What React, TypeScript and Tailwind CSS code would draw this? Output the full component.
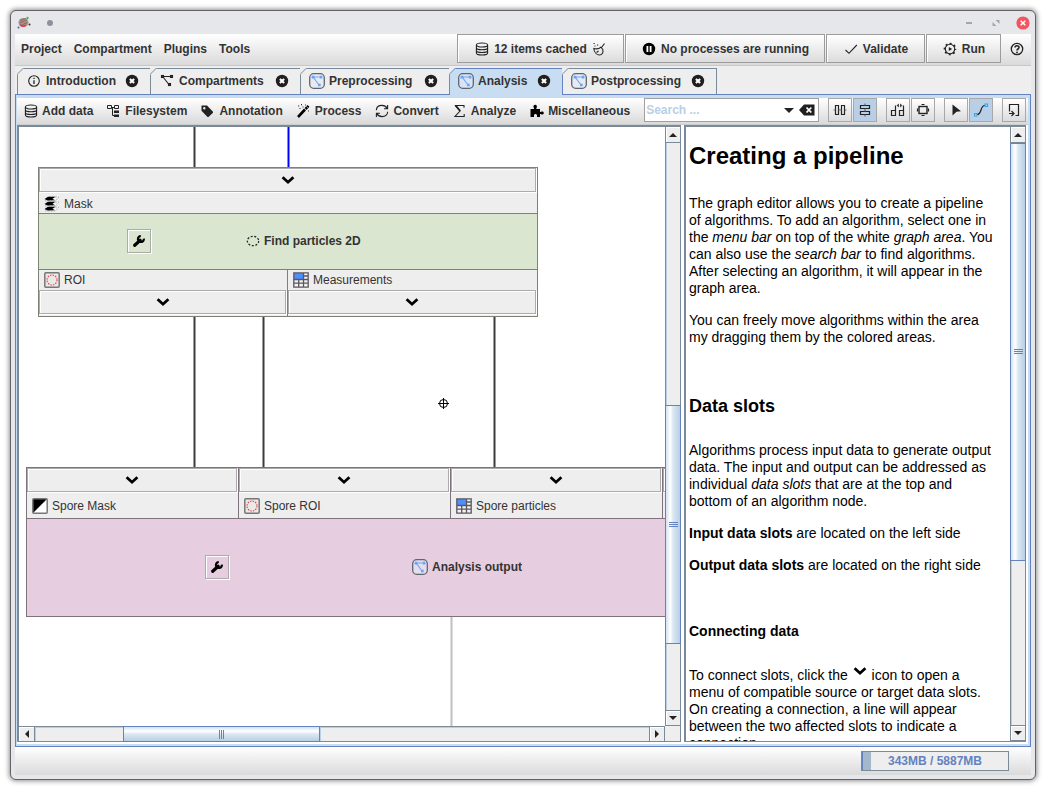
import React from "react";

type IconProps = { className?: string };

const svgBase = "h-4 w-4 shrink-0";

function Icon({ children, className = "" }: { children: React.ReactNode; className?: string }) {
  return (
    <svg viewBox="0 0 16 16" className={`${svgBase} ${className}`} fill="none" stroke="#222" strokeWidth="1.1" aria-hidden="true">
      {children}
    </svg>
  );
}

const DatabaseIcon = () => (
  <Icon>
    <ellipse cx="8" cy="4" rx="5.6" ry="2" />
    <path d="M2.4 4v8c0 1.2 2.5 2 5.6 2s5.6-.8 5.6-2V4M2.4 6.8c0 1.2 2.5 2 5.6 2s5.6-.8 5.6-2M2.4 9.5c0 1.2 2.5 2 5.6 2s5.6-.8 5.6-2" />
  </Icon>
);
const BroomIcon = () => (
  <Icon>
    <path d="M13.500 2.500 10.500 6.500M2.800 7.500c3 .8 5.400.3 7-1.300l2 2.300C12.500 11.800 11 14 8.500 14 5.800 14 3.200 11.500 2.800 7.500ZM5.500 11.500l2-1.500" />
    <path d="M2.500 2.500h1.200M6 4h1.200M3.500 5h1" strokeWidth="1.200" />
  </Icon>
);
const PauseIcon = () => (
  <Icon>
    <circle cx="8" cy="8" r="6.200" fill="#000" stroke="none" />
    <path d="M6.400 5v6M9.600 5v6" stroke="#fff" strokeWidth="1.800" />
  </Icon>
);
const CheckIcon = () => (
  <Icon>
    <path d="m2.500 9 3.500 3.300L13.800 4" />
  </Icon>
);
const GearPlayIcon = () => (
  <Icon>
    <circle cx="8" cy="8" r="4.700" />
    <circle cx="8" cy="8" r="5.600" strokeWidth="1.500" strokeDasharray="2 2.398" strokeDashoffset="1" />
    <path d="M6.800 5.900 10.200 8l-3.400 2.100Z" fill="#222" stroke="none" />
  </Icon>
);
const HelpIcon = () => (
  <Icon>
    <circle cx="8" cy="8" r="5.700" strokeWidth="1.300" />
    <path d="M6 6.600c0-2.400 4-2.400 4-.1C10 8 8 8 8 9.500" strokeWidth="1.600" />
    <circle cx="8" cy="11.400" r=".9" fill="#222" stroke="none" />
  </Icon>
);
const InfoIcon = () => (
  <Icon>
    <circle cx="8" cy="8" r="5.300" />
    <path d="M8 7.200v3.800M8 4.800v1.200" strokeWidth="1.300" />
  </Icon>
);
const GraphIcon = () => (
  <Icon>
    <path d="M5 3.500h6M4.500 4.500l5 6.500" />
    <rect x="2.500" y="2.500" width="2" height="2" />
    <rect x="11.500" y="2.500" width="2" height="2" />
    <rect x="9.500" y="10.500" width="2" height="2" />
  </Icon>
);
const CompartmentIcon = () => (
  <Icon>
    <rect x=".7" y=".7" width="14.600" height="14.600" rx="4" stroke="#5f6670" strokeWidth="1.300" fill="#e4e8f2" fillOpacity=".6" />
    <path d="M4 4h8M4.500 4.500l5.500 7.500" stroke="#6aa5f5" />
    <path d="M2.600 2.800h2.800v2.600H2.600zM10.800 2.800h2.600v2.600h-2.600zM9 10.800h2.700v2.400H9z" fill="#6aa5f5" stroke="none" />
  </Icon>
);
const TreeIcon = () => (
  <Icon>
    <path d="M1.500 2.500h4v3h-4zM8.500 2.500h4v3h-4zM5.500 4.500h3M6.500 4.500v8H8" strokeWidth="1" />
    <path d="M8 7.500h5v2.500H8zM8 11.500h5V14H8z" fill="#222" stroke="none" />
  </Icon>
);
const TagIcon = () => (
  <Icon>
    <path fillRule="evenodd" d="M1.500 2.500h5.500l6 6.200v1L8.500 14h-1L1.500 7.800ZM4.300 4a1.200 1.200 0 1 0 0 2.400 1.200 1.200 0 0 0 0-2.400Z" fill="#222" stroke="none" />
  </Icon>
);
const WandIcon = () => (
  <Icon>
    <path d="m2 14 7-7.500" stroke="#000" strokeWidth="2.600" />
    <path d="m9.500 6 3-3.200" stroke="#000" strokeWidth="2.600" />
    <path d="M10.500 3.600l1.200 1.100" stroke="#fff" strokeWidth=".8" />
    <path d="M2 3h1.200M5 1.600h1M6.500 4h1M3.500 5.500h1M12 8h1M9 2h1" stroke="#333" />
  </Icon>
);
const SyncIcon = () => (
  <Icon>
    <path d="M2.300 7.200C2.500 4 5.200 2.400 8 2.400c2.200 0 4 1 5.200 3M13.600 2v3.700H10M13.700 8.800c-.3 3.200-2.900 4.800-5.700 4.800-2.200 0-4-1-5.200-3M2.400 14v-3.700H6" />
  </Icon>
);
const SigmaIcon = () => (
  <Icon>
    <path d="M12 4.700V2.500H3.500L8 8l-5 5.500h9.200V11" strokeWidth="1.100" />
    <path d="M3.700 2.600 8.200 8" strokeWidth="1.800" />
  </Icon>
);
const PuzzleIcon = () => (
  <Icon>
    <path d="M1.500 6h3.300c.6 0 .2-.8-.1-1.300C4 3 4.900 1.700 6.200 1.700S8.300 3 7.700 4.700C7.400 5.200 7 6 7.600 6H11v2.600c0 .6.600.4 1.200.1 1.500-.7 2.600.1 2.600 1.300s-1.100 2-2.600 1.300c-.6-.3-1.200-.5-1.200.1V14H8v-1.500c0-2-3-2-3 0V14H1.500z" fill="#000" stroke="none" />
  </Icon>
);
const ChevronIcon = ({ className = "" }: IconProps) => (
  <Icon className={className}>
    <path d="m2.600 5.200 5.400 5 5.400-5" stroke="#000" strokeWidth="2.800" />
  </Icon>
);
const WrenchIcon = () => (
  <Icon>
    <path d="m3.700 12.300 5.500-5" stroke="#000" strokeWidth="3.200" strokeLinecap="round" />
    <path d="M12.900 5.700A3 3 0 1 1 9.800 3" stroke="#000" strokeWidth="2.200" />
  </Icon>
);
const ParticlesIcon = () => (
  <Icon>
    <ellipse cx="8" cy="8" rx="5.700" ry="4.700" stroke="#222" strokeWidth="1.200" strokeDasharray="2 1.600" />
  </Icon>
);
const RoiIcon = () => (
  <Icon>
    <rect x=".8" y=".8" width="14.400" height="14.400" rx="1" stroke="#777" strokeWidth="1.500" fill="#eae8e8" />
    <circle cx="8" cy="8" r="5" stroke="#e04848" strokeDasharray="1.500 1.120" />
  </Icon>
);
const TableIcon = () => (
  <Icon>
    <rect x=".8" y=".8" width="14.400" height="14.400" fill="#f2f2f2" stroke="none" />
    <path d="M1 1h9.500v6H1z" fill="#4a90ff" stroke="none" />
    <path d="M.8.800h14.400v14.400H.8zM.8 7.500h14.400M10.500.8v14.400M5.700 7.500v7.700M.8 11.200h14.400M10.500 4h4.700" stroke="#5b5560" strokeWidth="1.300" />
  </Icon>
);
const MaskIcon = () => (
  <Icon>
    <rect x=".8" y=".8" width="14.400" height="14.400" fill="#fff" stroke="none" />
    <path d="M1 15V1h14Z" fill="#000" stroke="none" />
    <rect x=".8" y=".8" width="14.400" height="14.400" rx="1" stroke="#777" strokeWidth="1.500" />
  </Icon>
);
const StackIcon = () => (
  <Icon>
    {[10, 5, 0].map((y) => (
      <g key={y} stroke="none">
        <path d={`M5 ${y + 1}h10L11 ${y + 5}H1Z`} fill="#f4f4f4" stroke="#aaa" strokeWidth=".8" strokeDasharray="2 1" />
        <path d={`M.5 ${y + 3} 4 ${y + 0.800}H11.500L8.500 ${y + 2.800} 11 ${y + 4.300} 3.500 ${y + 4.600}Z`} fill="#000" />
      </g>
    ))}
  </Icon>
);

const BarsVerticalIcon = () => (
  <Icon>
    <path d="M3.500 3.500h3v9h-3zM9.500 3.500h3v9h-3z" strokeWidth="1.200" />
    <path d="M1.500 8h2M6.500 8h3M12.500 8h2" stroke="#666" />
  </Icon>
);
const BarsHorizontalIcon = () => (
  <Icon>
    <path d="M3.500 3.500h9v3h-9zM3.500 9.500h9v3h-9z" strokeWidth="1.200" />
    <path d="M8 1.500v2M8 6.500v3M8 12.500v2" stroke="#666" />
  </Icon>
);
const AutoLayoutIcon = () => (
  <Icon>
    <path d="M1.500 8.500h4v5h-4zM9.500 8.500h4v5h-4zM5.500 8.500v-5M13.500 8.500v-5" strokeWidth="1.200" />
    <path d="M6.500 3.500 9 1.500v4zM12.500 3.500 10 1.500v4z" fill="#444" stroke="none" />
  </Icon>
);
const CenterIcon = () => (
  <Icon>
    <rect x="4" y="4.500" width="8" height="7" strokeWidth="1.400" />
    <path d="M6.500 2.500h3M6.500 13.500h3M2.500 6.500v3M13.500 6.500v3" strokeWidth="1.200" />
  </Icon>
);
const PointerIcon = () => (
  <Icon>
    <path d="M4.500 2.500 13 9.200 8.500 9.700 4.500 13.500Z" fill="#222" stroke="none" />
  </Icon>
);
const CurveIcon = () => (
  <Icon>
    <path d="M4 12.500c5.500 0 2.500-9 8-9" strokeWidth="1.200" />
    <path d="M1.500 11.500H4V14H1.500zM12 2h2.500v2.500H12z" stroke="#30a8e8" />
  </Icon>
);
const ExportIcon = () => (
  <Icon>
    <path d="M3.500 9.500v-7h9v11H9.500M3 11.500h4.500M5.500 9l2.500 2.500L5.500 14" strokeWidth="1.200" />
  </Icon>
);

const CloseDot = () => (
  <svg viewBox="0 0 14 14" className="h-3.5 w-3.5" aria-hidden="true">
    <circle cx="7" cy="7" r="6.200" fill="#1f1f1f" />
    <path d="m4.900 4.900 4.200 4.200M9.100 4.900 4.900 9.100" stroke="#fff" strokeWidth="2.100" />
  </svg>
);

function TitleBar() {
  return (
    <header className="flex h-[23px] shrink-0 items-center pl-[2px]">
      <svg viewBox="0 0 14 14" className="h-3.5 w-3.5" aria-hidden="true">
        <ellipse cx="6.500" cy="6.500" rx="5" ry="4.500" fill="#c08a80" />
        <path d="M3 4.500 9 2.500M2.500 7l7-3M4 9.500l6-3" stroke="#777" strokeWidth="1.200" />
        <path d="M3 8.500c1 2 4 2.500 6 .5" stroke="#d6402f" strokeWidth="1.400" fill="none" />
        <circle cx="10.500" cy="2" r="1.200" fill="#4db04d" />
        <circle cx="1.500" cy="11.500" r="1" fill="#4a5cc0" />
        <circle cx="12.500" cy="8.500" r="1" fill="#333" />
      </svg>
      <span className="ml-4 h-1.5 w-1.5 rounded-full bg-[#8e909b]" />
      <div className="ml-auto flex items-center gap-[13px] pr-px">
        <button aria-label="Minimize" className="flex h-3.5 w-3.5 items-center justify-center">
          <span className="h-[2px] w-1.5 bg-[#a4a6ae]" />
        </button>
        <button aria-label="Restore" className="h-3.5 w-3.5">
          <svg viewBox="0 0 14 14" className="h-3.5 w-3.5">
            <path d="M6.500 4h4v4zM3.500 6v4h4z" fill="#a4a6ae" />
          </svg>
        </button>
        <button aria-label="Close" className="h-3.5 w-3.5">
          <svg viewBox="0 0 14 14" className="h-3.5 w-3.5">
            <circle cx="7" cy="7" r="6.600" fill="#f25560" />
            <path d="m4.700 4.700 4.600 4.600M9.300 4.700 4.700 9.300" stroke="#fff" strokeWidth="1.600" />
          </svg>
        </button>
      </div>
    </header>
  );
}

const raised = "bg-gradient-to-b from-white to-[#dadada]";
const menuButton =
  "flex h-[29px] items-center justify-center gap-1 border border-[#9c9c9c] bg-gradient-to-b from-white to-[#dcdcdc] shadow-[inset_1px_1px_0_#fff]";

function MenuBar() {
  return (
    <div className={`flex h-8 shrink-0 items-start border-b border-[#c8c8c8] ${raised}`}>
      <nav className="flex h-[30px] items-center gap-3 pl-1.5">
        <button>Project</button>
        <button>Compartment</button>
        <button>Plugins</button>
        <button>Tools</button>
      </nav>
      <div className="ml-auto flex gap-px">
        <button className={`${menuButton} w-[167px]`}>
          <DatabaseIcon />
          12 items cached
          <BroomIcon />
        </button>
        <button className={`${menuButton} w-[200px]`}>
          <PauseIcon />
          No processes are running
        </button>
        <button className={`${menuButton} w-[99px]`}>
          <CheckIcon />
          Validate
        </button>
        <button className={`${menuButton} w-[75px]`}>
          <GearPlayIcon />
          Run
        </button>
        <button aria-label="Help" className="flex h-[30px] w-[29px] items-center justify-center">
          <HelpIcon />
        </button>
      </div>
    </div>
  );
}

const tabs = [
  { title: "Introduction", icon: <InfoIcon />, width: "w-[134px]" },
  { title: "Compartments", icon: <GraphIcon />, width: "w-[150px]" },
  { title: "Preprocessing", icon: <CompartmentIcon />, width: "w-[149px]" },
  { title: "Analysis", icon: <CompartmentIcon />, width: "w-[113px]", selected: true },
  { title: "Postprocessing", icon: <CompartmentIcon />, width: "w-[154px]" },
];

function TabStrip() {
  return (
    <div role="tablist" className="flex shrink-0 bg-[#eee] pt-[2px] pl-[2px]">
      {tabs.map((tab, i) => (
        <div
          key={tab.title}
          className={`relative flex items-center justify-between border-t border-r pr-[11px] pl-2 ${tab.width} ${
            i === 0 ? "border-l" : ""
          } ${
            tab.selected
              ? "-mb-px h-[27px] border-[#6382bf] bg-[#c8ddf2] pb-[3px]"
              : "h-[26px] border-[#7a8a99] bg-[#eee] pb-[2px]"
          }`}
        >
          <svg viewBox="0 0 7 7" className="absolute -top-px -left-px h-[7px] w-[7px]" aria-hidden="true">
            <path d="M0 0h7L0 7Z" fill="#eee" />
            <path d="M0 6.500 6.500 0" stroke={tab.selected ? "#6382bf" : "#7a8a99"} />
          </svg>
          <button role="tab" aria-selected={!!tab.selected} className="flex items-center gap-1">
            {tab.icon}
            {tab.title}
          </button>
          <button aria-label={`Close ${tab.title}`}>
            <CloseDot />
          </button>
        </div>
      ))}
    </div>
  );
}

const categories = [
  { label: "Add data", icon: <DatabaseIcon /> },
  { label: "Filesystem", icon: <TreeIcon /> },
  { label: "Annotation", icon: <TagIcon /> },
  { label: "Process", icon: <WandIcon /> },
  { label: "Convert", icon: <SyncIcon /> },
  { label: "Analyze", icon: <SigmaIcon /> },
  { label: "Miscellaneous", icon: <PuzzleIcon /> },
];

const toolGroups = [
  [
    { label: "Horizontal view", icon: <BarsVerticalIcon /> },
    { label: "Vertical view", icon: <BarsHorizontalIcon />, active: true },
  ],
  [
    { label: "Auto layout", icon: <AutoLayoutIcon /> },
    { label: "Center view", icon: <CenterIcon /> },
  ],
  [
    { label: "Select", icon: <PointerIcon /> },
    { label: "Draw curves", icon: <CurveIcon />, active: true },
  ],
  [{ label: "Export", icon: <ExportIcon /> }],
];

function Toolbar() {
  return (
    <div className={`flex h-[27px] shrink-0 items-start border-b border-[#ccc] pr-[2px] pl-1.5 ${raised}`}>
      <nav className="flex h-[25px] items-center gap-[13px]">
        {categories.map((c) => (
          <button key={c.label} className="flex items-center gap-[3px]">
            {c.icon}
            {c.label}
          </button>
        ))}
      </nav>
      <div className="ml-3.5 flex h-6 min-w-0 flex-1 items-center border border-[#a0a0a0] bg-white pr-0.5">
        <input
          aria-label="Search algorithms"
          placeholder="Search ..."
          className="w-full min-w-0 flex-1 bg-transparent pl-px text-xs font-bold outline-none placeholder:text-[#b8cfe5] placeholder:opacity-100"
        />
        <button aria-label="Show all" className="mr-1">
          <svg viewBox="0 0 10 5" className="h-[5px] w-2.5">
            <path d="M0 0h10L5 5Z" fill="#222" />
          </svg>
        </button>
        <button aria-label="Clear search">
          <svg viewBox="0 0 18 16" className="h-4 w-[18px]">
            <path d="M1 8 6 2.500h10.500v11H6Z" fill="#1f1f1f" />
            <path d="m8.500 5.500 4.800 5M13.300 5.500l-4.800 5" stroke="#fff" strokeWidth="1.800" />
          </svg>
        </button>
      </div>
      {toolGroups.map((group, i) => (
        <div key={i} className="ml-[9px] flex gap-px">
          {group.map((tool) => (
            <button
              key={tool.label}
              aria-label={tool.label}
              className={`flex h-6 w-6 items-center justify-center border border-[#a8a8a8] ${
                tool.active ? "bg-[#b8cfe5]" : "bg-gradient-to-b from-white to-[#dcdcdc]"
              }`}
            >
              {tool.icon}
            </button>
          ))}
        </div>
      ))}
    </div>
  );
}

function Arrow({ points }: { points: string }) {
  return (
    <svg viewBox="0 0 8 8" className="h-2 w-2" aria-hidden="true">
      <polygon points={points} fill="#222" />
    </svg>
  );
}

function VerticalScrollbar({ before, thumb, after }: { before: string; thumb: string; after: string }) {
  return (
    <div className="flex w-4 shrink-0 flex-col border-x border-[#7a8a99] bg-[#eee]">
      <button aria-label="Scroll up" className="flex h-4 shrink-0 items-center justify-center border-b border-[#7a8a99] shadow-[inset_1px_1px_0_#fff]">
        <Arrow points="0,6 4,2 8,6" />
      </button>
      <div className={`${before} border-l border-[#b8cfe5]`} />
      <div
        className={`${thumb} -mx-px flex flex-col items-center justify-center gap-px border border-[#6382bf] bg-[linear-gradient(to_right,#d3e2f0,#ffffff_30%,#dce8f3_50%,#b8cfe5)]`}
      >
        <span className="h-px w-[9px] bg-[#6382bf]" />
        <span className="h-px w-[9px] bg-[#6382bf]" />
        <span className="h-px w-[9px] bg-[#6382bf]" />
      </div>
      <div className={`${after} border-l border-[#b8cfe5]`} />
      <button aria-label="Scroll down" className="flex h-4 shrink-0 items-center justify-center border-y border-[#7a8a99] shadow-[inset_1px_1px_0_#fff]">
        <Arrow points="0,2 8,2 4,6" />
      </button>
    </div>
  );
}

function HorizontalScrollbar() {
  return (
    <div className="flex h-4 shrink-0 border-y border-[#7a8a99] bg-[#eee]">
      <button aria-label="Scroll left" className="flex w-4 shrink-0 items-center justify-center border-r border-[#7a8a99] shadow-[inset_1px_1px_0_#fff]">
        <Arrow points="6,0 6,8 2,4" />
      </button>
      <div className="flex-[88] border-t border-l border-[#b8cfe5]" />
      <div className="-my-px flex flex-[196] items-center justify-center gap-px border border-[#6382bf] bg-[linear-gradient(to_bottom,#d3e2f0,#ffffff_30%,#dce8f3_50%,#b8cfe5)]">
        <span className="h-[9px] w-px bg-[#6382bf]" />
        <span className="h-[9px] w-px bg-[#6382bf]" />
        <span className="h-[9px] w-px bg-[#6382bf]" />
      </div>
      <div className="flex-[330] border-t border-l border-[#b8cfe5]" />
      <button aria-label="Scroll right" className="flex w-4 shrink-0 items-center justify-center border-x border-[#7a8a99] shadow-[inset_1px_1px_0_#fff]">
        <Arrow points="2,0 2,8 6,4" />
      </button>
    </div>
  );
}

const bevel = "border border-[#ababab] shadow-[inset_1px_1px_0_#fff,1px_1px_0_#fff]";

function SlotButton({ label }: { label: string }) {
  return (
    <button aria-label={`Connect ${label}`} className={`mr-px flex h-6 items-center justify-center ${bevel}`}>
      <ChevronIcon />
    </button>
  );
}

function SlotLabel({ icon, label, className }: { icon: React.ReactNode; label: string; className: string }) {
  return (
    <div className={`flex items-center gap-1 pl-[5px] font-normal ${className}`}>
      {icon}
      {label}
    </div>
  );
}

function SettingsButton() {
  return (
    <button aria-label="Settings" className={`flex h-6 w-6 items-center justify-center ${bevel}`}>
      <WrenchIcon />
    </button>
  );
}

function ParticlesNode() {
  return (
    <section className="absolute top-[40px] left-[19px] flex w-[500px] flex-col border border-[#7c8275] bg-[#eee]">
      <SlotButton label="Mask" />
      <SlotLabel icon={<StackIcon />} label="Mask" className="h-[21px] pt-[2px]" />
      <div className="flex h-[57px] items-center border-y border-[#7c8275] bg-[#dbe6d0] pb-px pl-[88px]">
        <SettingsButton />
        <div className="ml-[94px] flex items-center gap-[3px]">
          <ParticlesIcon />
          Find particles 2D
        </div>
      </div>
      <div className="grid grid-cols-2">
        <div className="flex flex-col border-r border-[#7c8275] pb-[2px]">
          <SlotLabel icon={<RoiIcon />} label="ROI" className="h-5" />
          <SlotButton label="ROI" />
        </div>
        <div className="flex flex-col pb-[2px]">
          <SlotLabel icon={<TableIcon />} label="Measurements" className="h-5" />
          <SlotButton label="Measurements" />
        </div>
      </div>
    </section>
  );
}

const outputSlots = [
  { label: "Spore Mask", icon: <MaskIcon /> },
  { label: "Spore ROI", icon: <RoiIcon /> },
  { label: "Spore particles", icon: <TableIcon /> },
];

function OutputNode() {
  return (
    <section className="absolute top-[340px] left-[7px] flex w-[850px] flex-col border border-[#80727c] bg-[#eee]">
      <div className="grid grid-cols-4">
        {outputSlots.map((s) => (
          <div key={s.label} className="flex flex-col border-r border-[#80727c]">
            <SlotButton label={s.label} />
            <SlotLabel icon={s.icon} label={s.label} className="h-[26px] pt-[2px]" />
          </div>
        ))}
        <div className="flex flex-col">
          <SlotButton label="next slot" />
        </div>
      </div>
      <div className="flex h-[98px] items-center border-t border-[#80727c] bg-[#e6cee0] pb-px pl-[178px]">
        <SettingsButton />
        <div className="ml-[183px] flex items-center gap-1">
          <CompartmentIcon />
          Analysis output
        </div>
      </div>
    </section>
  );
}

function GraphCanvas() {
  return (
    <div className="relative min-h-0 min-w-0 flex-1 overflow-hidden bg-white">
      <svg className="absolute inset-0 h-full w-full" fill="none" strokeWidth="2" aria-hidden="true">
        <path d="M175.500 0v340M244.500 180v160M475.500 180v160" stroke="#3c3c3c" />
        <path d="M269.500 0v41" stroke="#0000ff" />
        <path d="M432.500 489v400" stroke="#c0c0c0" />
        <g stroke="#000" strokeWidth="1">
          <circle cx="424.500" cy="276.500" r="4" />
          <path d="M419 276.500h11M424.500 271v11" />
        </g>
      </svg>
      <ParticlesNode />
      <OutputNode />
    </div>
  );
}

function HelpPanel() {
  return (
    <aside className="flex w-[342px] shrink-0 border-t-2 border-b border-l-2 border-[#7a8a99] bg-white">
      <article className="min-h-0 min-w-0 flex-1 overflow-hidden pt-[15px] pr-[17px] pl-[3px] text-sm leading-[17px] font-normal text-black">
        <h1 className="text-2xl leading-7 font-bold">Creating a pipeline</h1>
        <p className="mt-[25px]">
          The graph editor allows you to create a pipeline of algorithms. To add an algorithm, select one in the{" "}
          <em>menu bar</em> on top of the white <em>graph area</em>. You can also use the <em>search bar</em> to find
          algorithms. After selecting an algorithm, it will appear in the graph area.
        </p>
        <p className="mt-[15px]">You can freely move algorithms within the area my dragging them by the colored areas.</p>
        <h2 className="mt-12 text-lg leading-6 font-bold">Data slots</h2>
        <p className="mt-6">
          Algorithms process input data to generate output data. The input and output can be addressed as individual{" "}
          <em>data slots</em> that are at the top and bottom of an algorithm node.
        </p>
        <p className="mt-[15px]">
          <b>Input data slots</b> are located on the left side
        </p>
        <p className="mt-[15px]">
          <b>Output data slots</b> are located on the right side
        </p>
        <h3 className="mt-[49px] font-bold">Connecting data</h3>
        <p className="mt-[27px]">
          To connect slots, click the <ChevronIcon className="inline-block align-text-bottom -mt-1 mb-1" /> icon to open a menu of
          compatible source or target data slots. On creating a connection, a line will appear between the two affected
          slots to indicate a connection.
        </p>
      </article>
      <VerticalScrollbar before="flex-[0]" thumb="flex-[418]" after="flex-[165]" />
    </aside>
  );
}

function StatusBar() {
  return (
    <footer className={`flex h-7 shrink-0 items-center justify-end pr-[22px] ${raised}`}>
      <div className="relative flex h-5 w-[148px] items-center justify-center border border-[#7a8a99] bg-[#eee] text-[#6382bf]">
        <span className="absolute inset-y-0 left-0 w-[9px] border-l border-[#6382bf] bg-[#a3b8cc]" />
        343MB / 5887MB
      </div>
    </footer>
  );
}

export default function App() {
  return (
    <div className="h-screen bg-white p-2.5 font-['Liberation_Sans',Arial,sans-serif] text-xs font-bold whitespace-nowrap text-[#333]">
      <div className="flex h-full flex-col rounded-md border border-[#636363] bg-[#e6e7eb] px-1 pb-1 shadow-[0_0_5px_1px_rgba(0,0,0,0.45)]">
        <TitleBar />
        <MenuBar />
        <TabStrip />
        <main className="flex min-h-0 flex-1 flex-col border border-[#6382bf] bg-[#c8ddf2] pt-[3px] pr-[2px] pb-0.5 pl-px">
          <Toolbar />
          <div className="flex min-h-0 flex-1 gap-[3px] bg-white pr-[2px] pb-[2px] whitespace-normal">
            <div className="flex min-w-0 flex-1 border-t-2 border-l-2 border-[#7a8a99]">
              <div className="flex min-w-0 flex-1 flex-col">
                <GraphCanvas />
                <HorizontalScrollbar />
              </div>
              <div className="flex flex-col bg-[#eee]">
                <div className="flex min-h-0 flex-1">
                  <VerticalScrollbar before="flex-[263]" thumb="flex-[238]" after="flex-[66]" />
                </div>
                <div className="h-4 border-r border-b border-[#7a8a99]" />
              </div>
            </div>
            <HelpPanel />
          </div>
        </main>
        <StatusBar />
      </div>
    </div>
  );
}
